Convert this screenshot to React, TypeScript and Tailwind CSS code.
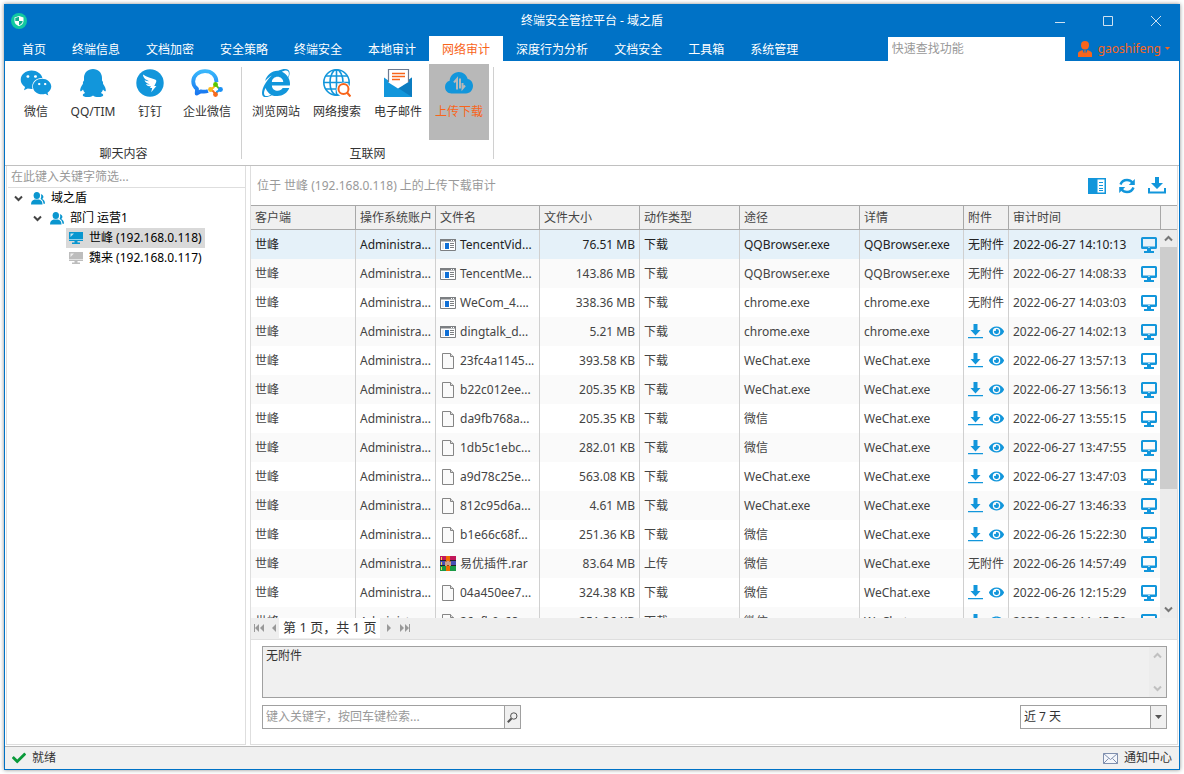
import { useState } from "react";
import type { ReactNode } from "react";
import { FaCheck, FaEye, FaInternetExplorer, FaWeixin } from "react-icons/fa";

const tabs = ["首页", "终端信息", "文档加密", "安全策略", "终端安全", "本地审计", "网络审计", "深度行为分析", "文档安全", "工具箱", "系统管理"];

type FileKind = "exe" | "doc" | "rar";

interface LogRow {
  kind: FileKind;
  file: string;
  size: string;
  action: string;
  path: string;
  detail: string;
  attached: boolean;
  time: string;
}

const row = (kind: FileKind, file: string, size: string, action: string, path: string, detail: string, attached: boolean, time: string): LogRow => ({
  kind, file, size, action, path, detail, attached, time,
});

const rows: LogRow[] = [
  row("exe", "TencentVid...", "76.51 MB", "下载", "QQBrowser.exe", "QQBrowser.exe", false, "2022-06-27 14:10:13"),
  row("exe", "TencentMe...", "143.86 MB", "下载", "QQBrowser.exe", "QQBrowser.exe", false, "2022-06-27 14:08:33"),
  row("exe", "WeCom_4....", "338.36 MB", "下载", "chrome.exe", "chrome.exe", false, "2022-06-27 14:03:03"),
  row("exe", "dingtalk_d...", "5.21 MB", "下载", "chrome.exe", "chrome.exe", true, "2022-06-27 14:02:13"),
  row("doc", "23fc4a1145...", "393.58 KB", "下载", "WeChat.exe", "WeChat.exe", true, "2022-06-27 13:57:13"),
  row("doc", "b22c012ee...", "205.35 KB", "下载", "WeChat.exe", "WeChat.exe", true, "2022-06-27 13:56:13"),
  row("doc", "da9fb768a...", "205.35 KB", "下载", "微信", "WeChat.exe", true, "2022-06-27 13:55:15"),
  row("doc", "1db5c1ebc...", "282.01 KB", "下载", "微信", "WeChat.exe", true, "2022-06-27 13:47:55"),
  row("doc", "a9d78c25e...", "563.08 KB", "下载", "WeChat.exe", "WeChat.exe", true, "2022-06-27 13:47:03"),
  row("doc", "812c95d6a...", "4.61 MB", "下载", "WeChat.exe", "WeChat.exe", true, "2022-06-27 13:46:33"),
  row("doc", "b1e66c68f...", "251.36 KB", "下载", "微信", "WeChat.exe", true, "2022-06-26 15:22:30"),
  row("rar", "易优插件.rar", "83.64 MB", "上传", "微信", "WeChat.exe", false, "2022-06-26 14:57:49"),
  row("doc", "04a450ee7...", "324.38 KB", "下载", "微信", "WeChat.exe", true, "2022-06-26 12:15:29"),
  row("doc", "26afb0c68...", "251.36 KB", "下载", "微信", "WeChat.exe", true, "2022-06-26 11:45:59"),
];

/* ---------- icons ---------- */

function ShieldLogo() {
  return (
    <svg width="16" height="16" viewBox="0 0 16 16">
      <circle cx="8" cy="8" r="8" fill="#12c9a0" />
      <path d="M8 3 12.5 4.5V8c0 2.6-2 4.3-4.5 5.2C5.5 12.3 3.5 10.6 3.5 8V4.5z" fill="#fff" />
      <path d="M8 3.8V8H4.3V5zM8 8h3.7c-.1 2-1.7 3.5-3.7 4.3z" fill="#0fae8c" />
    </svg>
  );
}

function QqIcon() {
  return (
    <svg width="28" height="28" viewBox="0 0 28 28" fill="#1296db">
      <path d="M14 0c5.200 0 9 3.800 9 9v2.500c.9 1 1.300 2.100 1 3.200 1.900 2.600 3 5.300 2.800 7-.2 1.300-1.500.6-2.800-1.200-.4 1.400-1.100 2.500-2.100 3.500 1.600.7 2.300 1.300 2.300 2.200 0 1.200-2 1.800-4.800 1.800-2.300 0-4.300-.5-5.400-1.500-1.100 1-3.100 1.500-5.400 1.500-2.800 0-4.800-.6-4.800-1.800 0-.9.700-1.500 2.300-2.200-1-1-1.700-2.100-2.100-3.500-1.300 1.800-2.600 2.500-2.800 1.200-.2-1.700.9-4.400 2.800-7-.3-1.100.1-2.200 1-3.200V9c0-5.200 3.800-9 9-9z" />
    </svg>
  );
}

function DingTalkIcon() {
  return (
    <svg width="28" height="28" viewBox="0 0 28 28">
      <circle cx="14" cy="14" r="13.7" fill="#1296db" />
      <path
        d="M7 5.500c3.800 2.700 8.300 3.600 12 5 1.400.6 1.600 1.500 1.100 2.700L18.300 17h2.100l-5.200 6.200 1-4.200h-2.100l.7-1.900c-2.800.7-4.200-.5-4.900-2 1.700.4 3 .4 4.200.2-3-.6-4.800-1.900-5.600-4 1.700.6 3.300.9 4.800.9C10 11 7 8.800 7 5.500z"
        fill="#fff"
      />
    </svg>
  );
}

function WeComIcon() {
  return (
    <svg width="32" height="28" viewBox="0 0 32 28" fill="none">
      <defs>
        <linearGradient id="wecom" x1="0" y1="0" x2="0" y2="1">
          <stop offset="0" stopColor="#38b6fb" />
          <stop offset="1" stopColor="#1a78f0" />
        </linearGradient>
      </defs>
      <path
        d="M25.500 13C25.500 6.500 20.500 2.200 14 2.200S2.200 6.700 2.200 12.500c0 3.200 1.500 5.600 3.800 7.300l-.3 4.700 4.300-2.200c2.500.6 4.900.4 7-.3"
        stroke="url(#wecom)"
        strokeWidth="3.800"
        strokeLinejoin="round"
      />
      <path d="M24.500 13.500l7 7-7 7-7-7z" fill="#fff" />
      <path d="M24.500 15l2.500 3.500 3 2" stroke="#5ac725" strokeWidth="2" />
      <path d="M29.500 20.500l-3.500 2.300-1.500 3" stroke="#1aa0f5" strokeWidth="2" />
      <path d="M24.500 25.500l-2.200-3.200-3-1.800" stroke="#f76b1c" strokeWidth="2" />
      <path d="M19.500 20.500l3-2 2-3.500" stroke="#fbb81a" strokeWidth="2" />
      <circle cx="24.500" cy="15.500" r="2.400" fill="#5ac700" />
      <circle cx="29.500" cy="20.500" r="2.400" fill="#1a90f5" />
      <circle cx="24.500" cy="25.500" r="2.400" fill="#f76b1c" />
      <circle cx="19.500" cy="20.500" r="2.400" fill="#fbb81a" />
    </svg>
  );
}

function GlobeSearchIcon() {
  return (
    <svg width="28" height="28" viewBox="0 0 28 28" fill="none" stroke="#1296db" strokeWidth="1.600">
      <circle cx="13.500" cy="13.500" r="12.700" />
      <ellipse cx="13.500" cy="13.500" rx="6.500" ry="12.700" />
      <path d="M13.500 1v25M1 13.500h25M3 7h21M3 20h21" />
      <circle cx="20.500" cy="20.500" r="7" fill="#fff" stroke="none" />
      <path d="M21 24l3 4h4v-8z" fill="#fff" stroke="none" />
      <circle cx="20.500" cy="20" r="5" stroke="#f8651b" strokeWidth="2" />
      <path d="M24 23.500l3.500 4" stroke="#f8651b" strokeWidth="2.200" />
    </svg>
  );
}

function MailIcon() {
  return (
    <svg width="28" height="28" viewBox="0 0 28 28">
      <path d="M0 8.500 5 12h18l5-3.500V28H0z" fill="#1296db" />
      <path d="M28 8.500V28L14 19z" fill="#0b7cc0" />
      <path d="M4.500.5h20V13L14 19.500 4.500 13.500z" fill="#fff" />
      <path d="M4.500 13V.5h20V13" fill="none" stroke="#6f7b90" strokeWidth="1.200" />
      <path d="M8 4.500h13M8 7.500h13M8 10.500h8" stroke="#f8651b" strokeWidth="1.300" />
    </svg>
  );
}

function CloudIcon() {
  return (
    <svg width="28" height="28" viewBox="0 0 28 28">
      <path
        d="M6.500 24.500C2.800 24.500 0 21.600 0 18c0-3.200 1.900-5.500 4.600-6.200C5 6.800 9 3 13.800 3c4.500 0 7.800 2.900 8.900 6.900 3.100.5 5.300 3.400 5.300 6.900 0 4.300-3 7.700-7 7.700z"
        fill="#1296db"
      />
      <path d="M12 20.500V10l-3 3.500M15 9.500V19.500M17.500 14v5.500l2.500-3" fill="none" stroke="#b8b8b8" strokeWidth="2" />
    </svg>
  );
}

function PeopleIcon() {
  return (
    <svg width="14" height="13" viewBox="0 0 14 13" fill="#0a96cf">
      <ellipse cx="5.800" cy="3.500" rx="3.200" ry="3.500" />
      <path d="M0 12.500c0-2.800 1-4.200 3.600-5h4.400c2.600.8 3.500 2.200 3.500 5z" />
      <path d="M9.800 2.200c1.700.3 2.600 1.300 2.600 2.600 0 1-.5 1.800-1.200 2.200 1.900.7 2.800 2.200 2.800 4.700h-1.500c-.2-2.400-1.200-4-3-4.800.8-1.200 1-3 .3-4.700z" />
    </svg>
  );
}

function PcIcon({ color }: { color: string }) {
  return (
    <svg width="14" height="12" viewBox="0 0 14 12" fill={color}>
      <path d="M0 0h14v9H0z" />
      <path d="M5.500 9h3v1.500H11V12H3v-1.500h2.500z" />
      <path d="M1.500 5V1.500H5L1.500 5zM0 7.300h14v.7H0z" fill="#fff" opacity=".75" />
    </svg>
  );
}

function MonitorIcon() {
  return (
    <svg width="16" height="16" viewBox="0 0 16 16" fill="#1296db">
      <path
        fillRule="evenodd"
        d="M1.500 0h13A1.500 1.500 0 0 1 16 1.500v9a1.500 1.500 0 0 1-1.500 1.500H10v2h3v2H3v-2h3v-2H1.500A1.500 1.500 0 0 1 0 10.500v-9A1.500 1.500 0 0 1 1.500 0zM2 2v7.500h12V2zM7.200 10.300v.8h1.600v-.8z"
      />
    </svg>
  );
}

function SaveIcon() {
  return (
    <svg width="15" height="15" viewBox="0 0 15 15" fill="#1296db">
      <path d="M5.500 0h4v6h3l-5 5.500-5-5.500h3zM0 13h15v1.300H0z" />
    </svg>
  );
}

function FileIcon({ kind }: { kind: FileKind }) {
  if (kind === "exe") {
    return (
      <svg width="16" height="12" viewBox="0 0 16 12">
        <path d="M.5.5h15v11H.5z" fill="#fff" stroke="#7c7f82" />
        <path d="M0 0h16v2.500H0z" fill="#7c7f82" />
        <path d="M11 1h1v1h-1zM13 1h1v1h-1z" fill="#fff" />
        <path d="M2 4h2v6H2z" fill="#e3e5e8" />
        <path d="M5 4h4v6H5z" fill="#0f6fd6" />
        <path d="M10 4.500h4M10 6.500h4M10 8.500h4" stroke="#7c7f82" />
      </svg>
    );
  }
  if (kind === "rar") {
    return (
      <svg width="16" height="15" viewBox="0 0 16 15">
        <path d="M0 0h16v5H0z" fill="#c2185b" />
        <path d="M0 5h16v5H0z" fill="#4a4fb5" />
        <path d="M0 10h16v5H0z" fill="#1a9a46" />
        <path d="M0 4.500h16M0 9.500h16" stroke="#222" />
        <path d="M1.500 1v3M1.500 6v3M1.500 11v3" stroke="#f5d24b" />
        <path d="M6 0h4v15H6z" fill="#ef6c00" />
        <path d="M5 5h6v5H5z" fill="#a0400f" />
        <path d="M6 10V5.500M8 9V5M10 10V5.500" stroke="#fff" />
      </svg>
    );
  }
  return (
    <svg width="16" height="16" viewBox="0 0 16 16" fill="#fafafa" stroke="#858585">
      <path d="M2.500.5h8l3 3v12h-11z" />
      <path d="M10.500.5v3h3" fill="#ddd" />
    </svg>
  );
}

function Chevron({ up, color }: { up?: boolean; color: string }) {
  return (
    <svg width="9" height="7" viewBox="0 0 9 7" fill="none" stroke={color} strokeWidth="2">
      <path d={up ? "M1 5.500 4.500 2 8 5.500" : "M1 1.500 4.500 5 8 1.500"} />
    </svg>
  );
}

/* ---------- ribbon ---------- */

function RibbonButton({ icon, label, narrow, active }: { icon: ReactNode; label: string; narrow?: boolean; active?: boolean }) {
  return (
    <button
      className={`flex h-[76px] flex-col items-center pt-[5px] ${narrow ? "w-[52px]" : "w-[60px]"} ${
        active ? "bg-[#b8b8b8] text-[#f8651b]" : "text-[#333]"
      }`}
    >
      <span className="flex h-7 items-center text-[#1296db]">{icon}</span>
      <span className="mt-[5px] whitespace-nowrap leading-5">{label}</span>
    </button>
  );
}

function RibbonGroup({ title, children }: { title: string; children: ReactNode }) {
  return (
    <section className="flex">
      <div className="flex flex-col px-1 pt-[3px]">
        <div className="flex gap-px">{children}</div>
        <h2 className="mt-[5px] text-center leading-[18px] text-[#333]">{title}</h2>
      </div>
      <div className="my-[6px] w-px bg-[#d0d0d0]" />
    </section>
  );
}

/* ---------- table ---------- */

const columns = [
  { title: "客户端", width: "w-[105px]" },
  { title: "操作系统账户", width: "w-[80px]" },
  { title: "文件名", width: "w-[104px]" },
  { title: "文件大小", width: "w-[100px]" },
  { title: "动作类型", width: "w-[100px]" },
  { title: "途径", width: "w-[120px]" },
  { title: "详情", width: "w-[104px]" },
  { title: "附件", width: "w-[45px]" },
  { title: "审计时间", width: "" },
];

function AuditTable() {
  const [selected, setSelected] = useState(0);
  const cell = "border-r border-[#d0d0d0] px-1";

  return (
    <div className="relative min-h-0 flex-1 overflow-hidden">
      <table className="w-full table-fixed border-separate border-spacing-0 whitespace-nowrap text-[#444]">
        <thead>
          <tr className="h-[25px] bg-[#f0f0f0] text-left">
            {columns.map((c) => (
              <th key={c.title} className={`${c.width} border-y border-r border-[#a8a8a8] p-0 pl-1 font-normal`}>
                {c.title}
              </th>
            ))}
            <th className="w-4 border-y border-[#a8a8a8] p-0" />
          </tr>
        </thead>
        <tbody>
          {rows.map((r, i) => (
            <tr
              key={r.time}
              onClick={() => setSelected(i)}
              className={`h-[29px] ${i === selected ? "bg-[#e5f1f9] text-[#222]" : i % 2 ? "bg-[#fafafa]" : "bg-white"}`}
            >
              <td className={cell}>世峰</td>
              <td className={cell}>Administra...</td>
              <td className={cell}>
                <div className="flex items-center gap-1">
                  <FileIcon kind={r.kind} />
                  {r.file}
                </div>
              </td>
              <td className={`${cell} text-right`}>{r.size}</td>
              <td className={cell}>{r.action}</td>
              <td className={cell}>{r.path}</td>
              <td className={cell}>{r.detail}</td>
              <td className={cell}>
                {r.attached ? (
                  <div className="flex items-center gap-[6px]">
                    <button aria-label="下载附件"><SaveIcon /></button>
                    <button aria-label="查看附件" className="text-[#1296db]"><FaEye size={15} /></button>
                  </div>
                ) : (
                  "无附件"
                )}
              </td>
              <td className="pr-1 pl-1">
                <div className="flex items-center justify-between">
                  {r.time}
                  <MonitorIcon />
                </div>
              </td>
              <td />
            </tr>
          ))}
        </tbody>
      </table>

      {/* scrollbar */}
      <div className="absolute top-[25px] right-0 bottom-0 flex w-[17px] flex-col items-center bg-[#ececec]">
        <div className="flex h-[17px] items-center"><Chevron up color="#777" /></div>
        <div className="w-full flex-[242] bg-[#cdcdcd]" />
        <div className="flex-[112]" />
        <div className="flex h-[17px] items-center"><Chevron color="#777" /></div>
      </div>
    </div>
  );
}

function PagerButton({ label, d, width }: { label: string; d: string; width: number }) {
  return (
    <button aria-label={label}>
      <svg width={width} height="8" viewBox={`0 0 ${width} 8`} fill="#999"><path d={d} /></svg>
    </button>
  );
}

/* ---------- app ---------- */

export default function App() {
  return (
    <div className="h-screen bg-white p-1 font-['Noto_Sans','Noto_Sans_CJK_SC',sans-serif] text-xs">
      <div className="flex h-full flex-col overflow-hidden border border-[#0072c6] bg-white shadow-[0_0_4px_rgba(0,0,0,0.45)]">
        <header className="bg-[#0072c6] text-white">
          <div className="grid h-[31px] grid-cols-[1fr_auto_1fr] items-center">
            <div className="flex pl-[6px]"><ShieldLogo /></div>
            <h1>终端安全管控平台 - 域之盾</h1>
            <div className="flex justify-end gap-[38px] pr-[18px]">
              <button aria-label="最小化">
                <svg width="10" height="10" viewBox="0 0 10 10" stroke="#cfe1f0"><path d="M0 6.500h10" /></svg>
              </button>
              <button aria-label="最大化">
                <svg width="10" height="10" viewBox="0 0 10 10" fill="none" stroke="#cfe1f0"><path d="M.5.5h9v9h-9z" /></svg>
              </button>
              <button aria-label="关闭">
                <svg width="10" height="10" viewBox="0 0 10 10" stroke="#cfe1f0"><path d="M0 0l10 10M10 0 0 10" /></svg>
              </button>
            </div>
          </div>
          <div className="flex h-[25px]">
            <nav className="flex pl-1">
              {tabs.map((t) => (
                <button
                  key={t}
                  className={`px-[13px] pt-[2px] whitespace-nowrap ${t === "网络审计" ? "bg-white text-[#f8651b]" : ""}`}
                >
                  {t}
                </button>
              ))}
            </nav>
            <input
              aria-label="快速查找功能"
              placeholder="快速查找功能"
              className="mt-px ml-auto w-[177px] bg-white px-1 text-[#333] outline-none placeholder:text-[#999]"
            />
            <button className="mr-[9px] ml-[13px] flex items-center text-[#f8651b]">
              <svg width="14" height="16" viewBox="0 0 14 16" fill="#f8651b">
                <ellipse cx="7" cy="4.200" rx="4" ry="4.200" />
                <path d="M0 16v-3.500C0 10.500 2 10 4.500 9L7 14.500 9.500 9c2.500 1 4.500 1.500 4.500 3.500V16z" />
                <path d="M6 9.500h2L7.500 11l.8 2.500L7 15l-1.300-1.500.8-2.500z" />
              </svg>
              <span className="ml-[6px] text-xs">gaoshifeng</span>
              <svg className="ml-1" width="5" height="3" viewBox="0 0 5 3" fill="#f8651b"><path d="M0 0h5L2.500 3z" /></svg>
            </button>
          </div>
        </header>

        <div className="flex h-[105px] border-b border-[#c0c0c0] pl-px">
          <RibbonGroup title="聊天内容">
            <RibbonButton narrow icon={<FaWeixin size={32} />} label="微信" />
            <RibbonButton icon={<QqIcon />} label="QQ/TIM" />
            <RibbonButton narrow icon={<DingTalkIcon />} label="钉钉" />
            <RibbonButton icon={<WeComIcon />} label="企业微信" />
          </RibbonGroup>
          <RibbonGroup title="互联网">
            <RibbonButton icon={<FaInternetExplorer size={28} />} label="浏览网站" />
            <RibbonButton icon={<GlobeSearchIcon />} label="网络搜索" />
            <RibbonButton icon={<MailIcon />} label="电子邮件" />
            <RibbonButton active icon={<CloudIcon />} label="上传下载" />
          </RibbonGroup>
        </div>

        <main className="flex min-h-0 flex-1 gap-1 px-px pb-px">
          <aside className="flex w-[240px] shrink-0 flex-col border-x border-b border-[#dedede]">
            <input
              aria-label="在此键入关键字筛选"
              placeholder="在此键入关键字筛选..."
              className="ml-px h-[22px] border-b border-[#dedede] pl-[3px] outline-none placeholder:text-[#999]"
            />
            <ul className="text-black">
              <li className="flex h-5 items-center pl-[7px]">
                <Chevron color="#444" />
                <span className="mr-[6px] ml-2"><PeopleIcon /></span>
                域之盾
              </li>
              <li className="flex h-5 items-center pl-[26px]">
                <Chevron color="#444" />
                <span className="mr-[6px] ml-2"><PeopleIcon /></span>
                部门 运营1
              </li>
              <li className="flex h-5 pl-[59px]">
                <span className="flex items-center gap-[6px] bg-[#d9d9d9] px-[3px]">
                  <PcIcon color="#0a96cf" />
                  世峰 (192.168.0.118)
                </span>
              </li>
              <li className="flex h-5 pl-[59px]">
                <span className="flex items-center gap-[6px] px-[3px]">
                  <PcIcon color="#bdbdbd" />
                  魏来 (192.168.0.117)
                </span>
              </li>
            </ul>
          </aside>

          <section className="flex min-w-0 flex-1 flex-col border-x border-b border-[#dedede]">
            <div className="flex h-[39px] shrink-0 items-center justify-between pr-[11px] pl-[6px]">
              <h2 className="text-[#999]">位于 世峰 (192.168.0.118) 上的上传下载审计</h2>
              <div className="flex items-center gap-3">
                <button aria-label="列设置">
                  <svg width="18" height="16" viewBox="0 0 18 16">
                    <path d="M0 0h18v16H0z" fill="#1296db" />
                    <path d="M9.500 1.500h7v13h-7z" fill="#fff" />
                    <path d="M11 4.500h4M11 7.500h4M11 10.500h4M11 12.500h4" stroke="#1296db" />
                  </svg>
                </button>
                <button aria-label="刷新">
                  <svg width="18" height="16" viewBox="0 0 18 16" fill="none" stroke="#1296db" strokeWidth="2.400">
                    <path d="M2.500 6.500C3.600 3.500 6 2 9 2c2.300 0 4.200 1 5.500 2.700" />
                    <path d="M15.500 9.500C14.400 12.500 12 14 9 14c-2.300 0-4.200-1-5.500-2.700" />
                    <path d="M16.800 1v6h-6zM1.200 15V9h6z" fill="#1296db" stroke="none" />
                  </svg>
                </button>
                <button aria-label="导出">
                  <svg width="18" height="17" viewBox="0 0 18 17" fill="#1296db">
                    <path d="M7 0h4v6h4l-6 6-6-6h4z" />
                    <path d="M0 11h2v3.500h14V11h2v5.500H0z" />
                  </svg>
                </button>
              </div>
            </div>

            <AuditTable />

            <div className="flex h-[22px] shrink-0 items-start border-b border-[#dedede] bg-[#eeeeee] pl-[3px]">
              <div className="flex h-5 items-center gap-2">
                <PagerButton label="首页" width={10} d="M0 0h1v8H0zM5 0v8L1 4zM10 0v8L6 4z" />
                <PagerButton label="上一页" width={4} d="M4 0v8L0 4z" />
              </div>
              <span className="mx-[3px] flex h-5 items-center bg-white px-1 text-[13px] text-[#333]">第 1 页，共 1 页</span>
              <div className="ml-1 flex h-5 items-center gap-2">
                <PagerButton label="下一页" width={5} d="M0 0v8l4-4z" />
                <PagerButton label="末页" width={10} d="M0 0v8l4-4zM5 0v8l4-4zM9 0h1v8H9z" />
              </div>
            </div>

            <div className="flex flex-col gap-[7px] pt-[6px] pr-[10px] pb-[15px] pl-[11px]">
              <div className="flex h-[52px] border border-[#a0a0a0] bg-[#f0f0f0]">
                <textarea
                  aria-label="附件内容"
                  readOnly
                  value="无附件"
                  className="flex-1 resize-none overflow-hidden px-[3px] leading-[18px] text-[#333] outline-none"
                />
                <div className="flex w-[17px] flex-col items-center justify-between bg-[#ececec] py-[5px]">
                  <Chevron up color="#c0c0c0" />
                  <Chevron color="#c0c0c0" />
                </div>
              </div>
              <div className="flex justify-between">
                <div className="flex h-6 w-[259px] border border-[#a0a0a0]">
                  <input
                    aria-label="键入关键字"
                    placeholder="键入关键字，按回车键检索..."
                    className="min-w-0 flex-1 px-[3px] outline-none placeholder:text-[#999]"
                  />
                  <button aria-label="检索" className="flex w-4 items-center justify-center border-l border-[#a0a0a0] bg-[#f0f0f0]">
                    <svg width="11" height="11" viewBox="0 0 11 11" fill="none" stroke="#555">
                      <circle cx="6.800" cy="4" r="3.200" />
                      <path d="M4.500 6.500.8 10.200" strokeWidth="2" />
                    </svg>
                  </button>
                </div>
                <div className="relative h-6 w-[147px] border border-[#a0a0a0]">
                  <select aria-label="时间范围" className="h-full w-full appearance-none px-[3px] text-[#333] outline-none">
                    <option>近 7 天</option>
                  </select>
                  <div className="pointer-events-none absolute top-0 right-0 flex h-full w-4 items-center justify-center border-l border-[#a0a0a0] bg-[#f0f0f0]">
                    <svg width="7" height="4" viewBox="0 0 7 4" fill="#555"><path d="M0 0h7L3.500 4z" /></svg>
                  </div>
                </div>
              </div>
            </div>
          </section>
        </main>

        <footer className="flex h-[23px] shrink-0 items-center justify-between border-t border-[#b8b8b8] bg-[#f0f0f0] pr-[7px] pl-[7px] text-[#333]">
          <span className="flex items-center gap-[6px]"><FaCheck size={14} color="#0a9a3a" />就绪</span>
          <button className="flex items-center gap-[6px]">
            <svg width="15" height="11" viewBox="0 0 15 11" fill="#f4f6fb" stroke="#7f8fae">
              <path d="M.5.5h14v10H.5z" />
              <path d="M.5.5l7 6 7-6M.5 10.500l5-5M14.500 10.500l-5-5" fill="none" />
            </svg>
            通知中心
          </button>
        </footer>
      </div>
    </div>
  );
}
